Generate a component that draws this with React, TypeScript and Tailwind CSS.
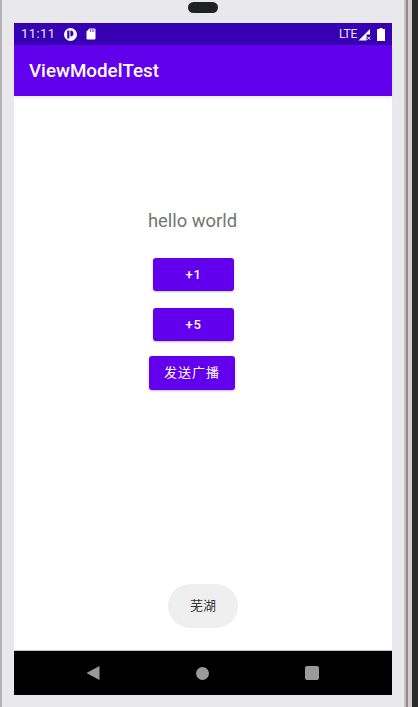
import { Fragment } from "react";

const sans = "font-['Roboto','Noto_Sans_CJK_SC',sans-serif]";

function SimIcon() {
  return (
    <svg width="10" height="12" viewBox="0 0 10 12" className="ml-[9px]">
      <path d="M3.5 0.5H8.5Q9.5 0.5 9.5 1.5V10.5Q9.5 11.5 8.5 11.5H1.5Q0.5 11.5 0.5 10.5V3.5Z" fill="#fff" />
      <path d="M4.5 1V4M6.2 1V4M7.9 1V4" stroke="#3700b3" strokeWidth="0.6" />
    </svg>
  );
}

function CircleP() {
  return (
    <svg width="13" height="13" viewBox="0 0 13 13" className="ml-[9px]">
      <circle cx="6.5" cy="6.5" r="6.5" fill="#fff" />
      <path d="M3.2 2.6H5.4V10.4H3.2ZM6.4 2.6A3 3 0 0 1 6.4 8.6Z" fill="#3700b3" />
    </svg>
  );
}

function StatusBar() {
  return (
    <div className="flex h-[22px] items-center bg-[#3700b3] pl-[7px] pr-[7px] text-[#e9e2fb]">
      <span className="text-[13px] tracking-[0.4px]">11:11</span>
      <CircleP />
      <SimIcon />
      <span className="ml-auto text-[12px] tracking-[-0.3px]">LTE</span>
      <svg width="13" height="13" viewBox="0 0 13 13" className="ml-[1px]">
        <path d="M0.5 12.5L12 1V6.5H8.5V12.5Z" fill="#fff" />
        <path d="M9.2 8.7L12.2 11.7M12.2 8.7L9.2 11.7" stroke="#fff" strokeWidth="1" />
      </svg>
      <svg width="8" height="13" viewBox="0 0 8 13" className="ml-[6px]">
        <path d="M2.5 0H5.5V1H7.5Q8 1 8 1.5V12.5Q8 13 7.5 13H0.5Q0 13 0 12.5V1.5Q0 1 0.5 1H2.5Z" fill="#fff" />
      </svg>
    </div>
  );
}

function PurpleButton({ label, className }: { label: string; className: string }) {
  return (
    <button
      className={`flex items-center justify-center rounded-[3px] bg-[#6200ee] text-white shadow-[0_1px_2px_rgba(0,0,0,0.25)] ${className}`}
    >
      {label}
    </button>
  );
}

function NavBar() {
  return (
    <div className="flex h-[45px] items-center justify-between border-t border-[#c4c4c4] bg-black pl-[72px] pr-[73px]">
      <svg width="14" height="16" viewBox="0 0 14 16">
        <path d="M13.5 1V15L0.5 8Z" fill="#9a9a9a" />
      </svg>
      <span className="h-[13px] w-[13px] rounded-full bg-[#9a9a9a]" />
      <span className="h-[14px] w-[14px] rounded-[2px] bg-[#9a9a9a]" />
    </div>
  );
}

export default function App() {
  return (
    <Fragment>
      <div className={`flex h-[707px] w-[418px] overflow-hidden bg-[#e9e9eb] ${sans}`}>
        <div className="w-[2px] shrink-0 bg-[#b5b0b2]" />
        <div className="flex w-[402px] shrink-0 flex-col pl-[12px] pr-[12px]">
          <div className="flex h-[23px] justify-center pt-[2px]">
            <div className="h-[11px] w-[30px] rounded-full bg-[#202124]" />
          </div>
          <div className="flex h-[672px] w-[378px] flex-col bg-white">
            <StatusBar />
            <div className="flex h-[51px] items-center bg-[#6200ee] pl-[15px] pt-[1px] text-[18.8px] font-medium text-white shadow-[0_2px_3px_rgba(0,0,0,0.08)]">
              ViewModelTest
            </div>
            <div className="flex flex-1 flex-col">
              <div className="ml-[134px] mt-[113px] flex w-[89px] flex-col items-center">
                <p className="whitespace-nowrap text-[18.4px] leading-[24px] text-[#757575]">hello world</p>
                <PurpleButton label="+1" className="ml-[2px] mt-[25px] h-[33px] w-[81px] text-[13px] font-medium tracking-[0.6px]" />
                <PurpleButton label="+5" className="ml-[2px] mt-[17px] h-[33px] w-[81px] text-[13px] font-medium tracking-[0.6px]" />
                <PurpleButton label="发送广播" className="mt-[15px] ml-[-1px] h-[34px] w-[86px] text-[13px] tracking-[1px]" />
              </div>
              <div className="mb-[22px] mt-auto flex h-[44px] w-[70px] items-center justify-center self-center rounded-[22px] bg-[#efefef] text-[13px] text-[#333]">
                芜湖
              </div>
            </div>
            <NavBar />
          </div>
        </div>
        <div className="flex flex-1">
          <div className="w-[2px] bg-[#c4bfc1]" />
          <div className="w-[2px] bg-[#8f8b8d]" />
          <div className="w-[4px] bg-[#d4d0d2]" />
          <div className="flex-1 bg-[#2b2b2b]" />
        </div>
      </div>
    </Fragment>
  );
}
